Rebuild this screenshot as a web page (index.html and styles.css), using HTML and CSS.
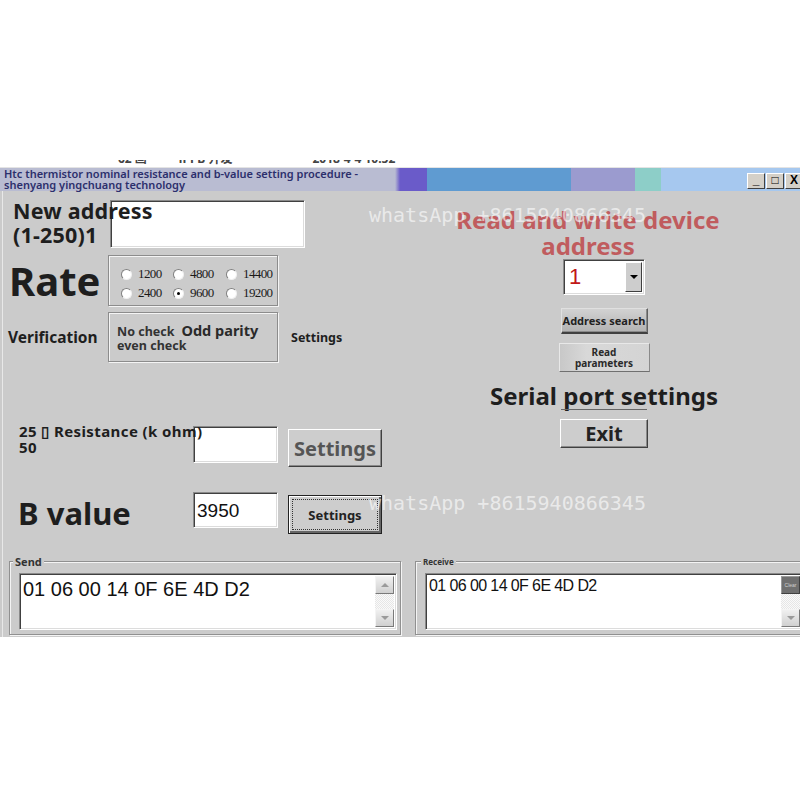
FILE: index.html
```html
<!DOCTYPE html>
<html lang="en">
<head>
  <meta charset="UTF-8" />
  <meta name="viewport" content="width=device-width, initial-scale=1" />
  <title>Thermistor setting procedure</title>
  <link rel="stylesheet" href="styles.css">
</head>
<body>

<div class="taskbar-edge"><span>62 画</span><span>iPPB 开发</span><span>2018-4-4 10:52</span></div>

<div class="window">
  <div class="titlebar">
    <div class="title">Htc thermistor nominal resistance and b-value setting procedure -<br>shenyang yingchuang technology</div>
    <div class="band band-fade"></div>
    <div class="band band-purple"></div>
    <div class="band band-blue"></div>
    <div class="band band-lilac"></div>
    <div class="band band-teal"></div>
    <div class="band band-sky">
      <div class="caption-btns">
        <span class="cap-btn">_</span>
        <span class="cap-btn">&#9633;</span>
        <span class="cap-btn">X</span>
      </div>
    </div>
  </div>

  <div class="client">
    <div class="main">
      <!-- device parameters -->
      <div class="left">
        <div class="row row-address">
          <div class="lbl-address">New address<br>(1-250)1</div>
          <div class="field field-address"></div>
        </div>

        <div class="row row-rate">
          <div class="lbl-rate">Rate</div>
          <div class="group rate-group">
            <label class="radio"><span class="dot"></span>1200</label>
            <label class="radio"><span class="dot"></span>4800</label>
            <label class="radio"><span class="dot"></span>14400</label>
            <label class="radio"><span class="dot"></span>2400</label>
            <label class="radio"><span class="dot checked"></span>9600</label>
            <label class="radio"><span class="dot"></span>19200</label>
          </div>
        </div>

        <div class="row row-verify">
          <div class="lbl-verify">Verification</div>
          <div class="group verify-group">
            <div class="verify-line"><span class="small">No check</span><span class="odd">Odd parity</span></div>
            <div class="small">even check</div>
          </div>
          <div class="lbl-settings">Settings</div>
        </div>

        <div class="row row-resist">
          <div class="lbl-resist">25 &#9647; Resistance (k ohm)<br>50</div>
          <div class="field field-num"></div>
          <button class="btn btn-big">Settings</button>
        </div>

        <div class="row row-bvalue">
          <div class="lbl-bvalue">B value</div>
          <div class="field field-num field-b">3950</div>
          <button class="btn btn-default"><span class="focus">Settings</span></button>
        </div>
      </div>

      <!-- serial port side -->
      <div class="right">
        <div class="rw-title">Read and write device<br>address</div>
        <div class="combo">
          <span class="combo-val">1</span>
          <span class="combo-arrow"><span class="tri"></span></span>
        </div>
        <button class="btn btn-search">Address search</button>
        <button class="btn btn-read">Read<br>parameters</button>
        <div class="port-title">Serial port settings</div>
        <div class="port-line"></div>
        <button class="btn btn-exit">Exit</button>
      </div>
    </div>

    <div class="io">
      <div class="io-group io-send">
        <span class="io-legend">Send</span>
        <div class="io-box">
          <div class="io-text">01 06 00 14 0F 6E 4D D2</div>
          <div class="scroll">
            <span class="sb-btn"><span class="arr up"></span></span>
            <span class="sb-track"></span>
            <span class="sb-btn"><span class="arr down"></span></span>
          </div>
        </div>
      </div>
      <div class="io-group io-recv">
        <span class="io-legend small-legend">Receive</span>
        <div class="io-box">
          <div class="io-text io-text-small">01 06 00 14 0F 6E 4D D2</div>
          <div class="scroll">
            <span class="sb-btn sb-clear">Clear</span>
            <span class="sb-track"></span>
            <span class="sb-btn"><span class="arr down"></span></span>
          </div>
        </div>
      </div>
    </div>

    <div class="wm wm-top">whatsApp +8615940866345</div>
    <div class="wm wm-bottom">whatsApp +8615940866345</div>
  </div>
</div>

</body>
</html>
```

FILE: styles.css
```css
* { box-sizing: border-box; }

html, body {
  margin: 0;
  padding: 0;
  background: #fff;
  overflow: hidden;
}

body {
  font-family: 'Noto Sans', 'Open Sans', sans-serif;
  color: #1e1e1e;
  padding-top: 160px;
}

/* strip of the desktop above the window, mostly cut off */
.taskbar-edge {
  height: 7px;
  overflow: hidden;
  display: flex;
  gap: 32px;
  padding-left: 118px;
  font: bold 12px 'Noto Sans', 'Noto Sans CJK SC', sans-serif;
  color: #444;
  line-height: 4px;
}
.taskbar-edge span { margin-top: -3px; }
.taskbar-edge span:last-child { margin-left: 48px; }

.window {
  width: 820px;
  background: #cbcbcb;
  border-top: 1px solid #e4e4e4;
  position: relative;
}

/* title bar */
.titlebar {
  display: flex;
  height: 23px;
}
.title {
  width: 395px;
  background: #b9bcd2;
  color: #2c2f6c;
  font-size: 11px;
  font-weight: 600;
  line-height: 10.5px;
  padding: 1px 0 0 4px;
  white-space: nowrap;
}
.band { height: 100%; }
.band-fade { width: 5px; background: linear-gradient(90deg, #b9bcd2, #6a5bc9); }
.band-purple { width: 27px; background: #6a5bc9; }
.band-blue { width: 144px; background: #5f9bd1; }
.band-lilac { width: 64px; background: #9b9bcf; }
.band-teal { width: 26px; background: #8dcec8; }
.band-sky {
  flex: 1;
  background: #a6c8ef;
  padding: 5px 0 0 86px;
}
.caption-btns { display: flex; gap: 1px; }
.cap-btn {
  width: 18px;
  height: 16px;
  background: #d4d0c8;
  border: 1px solid;
  border-color: #fff #404040 #404040 #fff;
  font: bold 12px 'Liberation Sans', sans-serif;
  line-height: 13px;
  text-align: center;
  color: #000;
}

/* client area */
.client {
  position: relative;
  height: 446px;
  border-left: 1px solid #e8e8e8;
  margin-left: 2px;
}
.main {
  display: flex;
  height: 364px;
}
.left {
  width: 398px;
  padding-top: 9px;
}
.row {
  display: flex;
  align-items: center;
}

/* sunken edit field */
.field {
  background: #fff;
  border: 1px solid;
  border-color: #8a8a8a #fff #fff #8a8a8a;
  box-shadow: inset 1px 1px #404040, inset -1px -1px #dcdcdc;
}

/* raised push button */
.btn {
  font-family: 'Noto Sans', sans-serif;
  font-weight: bold;
  background: #cdcdcd;
  border: 1px solid;
  border-color: #fff #404040 #404040 #fff;
  box-shadow: inset -1px -1px #8a8a8a;
  color: #222;
  padding: 0;
  cursor: pointer;
}

/* etched group frame */
.group {
  border: 1px solid #8c8c8c;
  box-shadow: inset 1px 1px #f4f4f4, 1px 1px #f4f4f4;
}

.row-address { height: 48px; align-items: flex-start; }
.lbl-address {
  position: relative;
  z-index: 1;
  width: 107px;
  padding-left: 10px;
  font-size: 21.5px;
  font-weight: bold;
  letter-spacing: 0.2px;
  line-height: 24px;
  margin-top: -1px;
  white-space: nowrap;
}
.field-address { width: 195px; height: 48px; }

.row-rate { margin-top: 7px; height: 51px; }
.lbl-rate {
  width: 105px;
  padding-left: 6px;
  font-size: 40px;
  font-weight: bold;
  line-height: 51px;
}
.rate-group {
  width: 170px;
  height: 51px;
  display: grid;
  grid-template-columns: 52px 53px auto;
  align-content: start;
  row-gap: 3px;
  padding: 10px 0 0 12px;
}
.radio {
  display: flex;
  align-items: center;
  gap: 6px;
  font: 13px 'Liberation Serif', serif;
  letter-spacing: -0.6px;
  line-height: 16px;
  color: #1a1a1a;
}
.dot {
  width: 11px;
  height: 11px;
  border-radius: 50%;
  background: #fff;
  border: 1px solid;
  border-color: #808080 #f0f0f0 #f0f0f0 #808080;
  position: relative;
}
.dot.checked::after {
  content: "";
  position: absolute;
  left: 3px;
  top: 3px;
  width: 3px;
  height: 3px;
  border-radius: 50%;
  background: #000;
}

.row-verify { margin-top: 6px; height: 50px; }
.lbl-verify {
  width: 105px;
  padding-left: 5px;
  font-size: 15.5px;
  font-weight: bold;
  white-space: nowrap;
}
.verify-group {
  width: 170px;
  height: 50px;
  padding: 10px 0 0 8px;
  color: #333;
}
.verify-line { display: flex; align-items: baseline; gap: 7px; }
.small { font-size: 12.5px; font-weight: bold; line-height: 14px; }
.odd { font-size: 14.5px; font-weight: bold; line-height: 14px; color: #2a2a2a; }
.lbl-settings {
  margin-left: 13px;
  font-size: 12.5px;
  font-weight: bold;
}

.row-resist { margin-top: 64px; height: 40px; }
.lbl-resist {
  position: relative;
  z-index: 1;
  width: 190px;
  padding-left: 16px;
  font-size: 15px;
  font-weight: bold;
  letter-spacing: 0.4px;
  line-height: 16px;
  margin-top: -15px;
  white-space: nowrap;
}
.field-num { width: 85px; height: 37px; }
.row-resist .field-num { align-self: flex-start; }
.btn-big {
  width: 94px;
  height: 38px;
  margin-left: 10px;
  margin-top: 4px;
  font-size: 20px;
  color: #555;
}

.row-bvalue { margin-top: 26px; height: 41px; }
.lbl-bvalue {
  width: 190px;
  padding-left: 15px;
  font-size: 31px;
  font-weight: bold;
}
.field-b {
  align-self: flex-start;
  height: 36px;
  font: 19px 'Liberation Sans', sans-serif;
  line-height: 36px;
  padding-left: 3px;
  color: #111;
}
.btn-default {
  width: 94px;
  height: 39px;
  margin-left: 10px;
  margin-top: 4px;
  border: 1px solid #222;
  box-shadow: inset 1px 1px #fff, inset -2px -2px #666;
  font-size: 13px;
  padding: 3px;
}
.btn-default .focus {
  display: flex;
  height: 100%;
  align-items: center;
  justify-content: center;
  border: 1px dotted #333;
}

/* right column */
.right {
  width: 406px;
  display: flex;
  flex-direction: column;
  align-items: center;
}
.rw-title {
  margin-top: 16px;
  margin-right: 32px;
  font-size: 24px;
  font-weight: bold;
  line-height: 26px;
  text-align: center;
  color: #c05c5e;
  white-space: nowrap;
}
.combo {
  width: 82px;
  height: 36px;
  display: flex;
  background: #fff;
  border: 1px solid;
  border-color: #8a8a8a #fff #fff #8a8a8a;
  box-shadow: inset 1px 1px #404040, inset -1px -1px #dcdcdc;
  padding: 2px;
}
.combo-val {
  flex: 1;
  font: 22px 'Liberation Sans', sans-serif;
  color: #c01818;
  line-height: 30px;
  padding-left: 3px;
}
.combo-arrow {
  width: 17px;
  background: #cdcdcd;
  border: 1px solid;
  border-color: #fff #404040 #404040 #fff;
  display: flex;
  align-items: center;
  justify-content: center;
}
.tri {
  border-left: 4px solid transparent;
  border-right: 4px solid transparent;
  border-top: 4px solid #000;
}
.btn-search {
  margin-top: 13px;
  width: 87px;
  height: 26px;
  font-size: 11px;
  background: linear-gradient(180deg, #d2d2d2, #b2b2b2);
  border-color: #e0e0e0 #606060 #404040 #e0e0e0;
  border-bottom-width: 2px;
}
.btn-read {
  margin-top: 9px;
  width: 91px;
  height: 29px;
  font-size: 10px;
  line-height: 11px;
  background: linear-gradient(90deg, #c8c8c8, #d8d8d8 30%, #d4d4d4);
  border-color: #e8e8e8 #8a8a8a #707070 #e8e8e8;
  box-shadow: none;
  color: #2a2a2a;
}
.port-title {
  margin-top: 11px;
  font-size: 24px;
  font-weight: bold;
  line-height: 26px;
  white-space: nowrap;
}
.port-line {
  width: 86px;
  height: 1px;
  background: #666;
}
.btn-exit {
  margin-top: 9px;
  width: 88px;
  height: 29px;
  font-size: 20px;
  line-height: 24px;
}

/* send / receive boxes */
.io {
  display: flex;
  gap: 14px;
  padding: 6px 0 0 6px;
}
.io-group {
  position: relative;
  width: 392px;
  height: 74px;
  border: 1px solid #909090;
  box-shadow: inset 1px 1px #f4f4f4, 1px 1px #f4f4f4;
  padding: 11px 3px 3px 9px;
}
.io-legend {
  position: absolute;
  top: -8px;
  left: 3px;
  padding: 0 2px;
  background: #cbcbcb;
  font-size: 11px;
  font-weight: bold;
  color: #333;
}
.small-legend { font-size: 8px; top: -6px; left: 5px; }
.io-box {
  display: flex;
  height: 57px;
  background: #fff;
  border: 1px solid;
  border-color: #8a8a8a #fff #fff #8a8a8a;
  box-shadow: inset 1px 1px #404040, inset -1px -1px #dcdcdc;
  padding: 2px 2px 2px 3px;
}
.io-text {
  flex: 1;
  font: 20px 'Liberation Sans', sans-serif;
  color: #111;
  line-height: 26px;
}
.io-text-small {
  font-size: 16px;
  letter-spacing: -0.6px;
  line-height: 20px;
}
.scroll {
  width: 19px;
  display: flex;
  flex-direction: column;
}
.sb-btn {
  height: 18px;
  background: linear-gradient(180deg, #f0f0f0, #d0d0d0);
  border: 1px solid;
  border-color: #f4f4f4 #7a7a7a #7a7a7a #f4f4f4;
  display: flex;
  align-items: center;
  justify-content: center;
}
.sb-track {
  flex: 1;
  background: repeating-conic-gradient(#e6e6e6 0 25%, #fafafa 0 50%) 0 0 / 2px 2px;
}
.arr {
  border-left: 4px solid transparent;
  border-right: 4px solid transparent;
}
.arr.up { border-bottom: 4px solid #9a9a9a; }
.arr.down { border-top: 4px solid #9a9a9a; }
.sb-clear {
  background: #6f6f6f;
  border-color: #9a9a9a #404040 #404040 #9a9a9a;
  color: #cfcfcf;
  font: 5px 'Liberation Sans', sans-serif;
}

/* overlay text */
.wm {
  position: absolute;
  left: 366px;
  font: 20px 'DejaVu Sans Mono', monospace;
  color: rgba(255, 255, 255, 0.6);
  white-space: nowrap;
  pointer-events: none;
}
.wm-top { top: 12px; }
.wm-bottom { top: 300px; }
```
